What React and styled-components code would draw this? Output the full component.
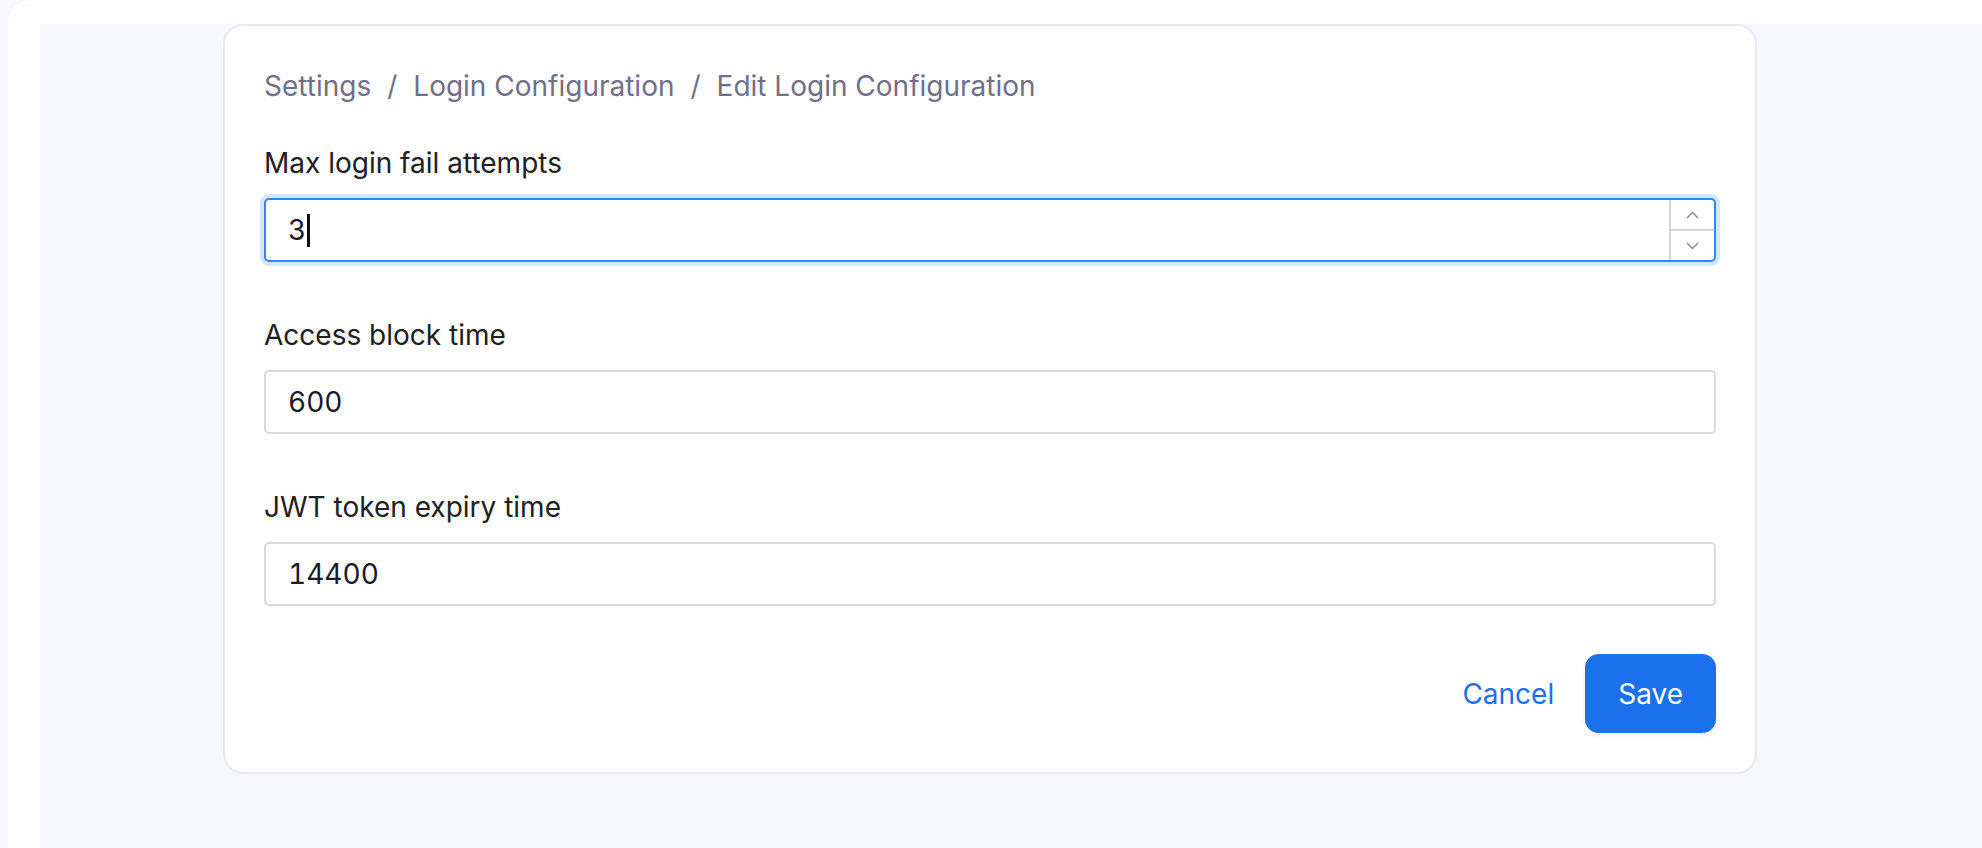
import React from 'react';
import styled, { createGlobalStyle } from 'styled-components';

const GlobalStyle = createGlobalStyle`
    html, body {
        margin: 0;
        padding: 0;
        background: #f7f8fc;
        font-family: Inter, "Noto Sans", sans-serif;
    }
    #root {
        min-height: 100vh;
        display: flex;
    }
`;

const fields = [
    { label: 'Max login fail attempts', value: '3', focused: true },
    { label: 'Access block time', value: '600' },
    { label: 'JWT token expiry time', value: '14400' },
];

const crumbs = ['Settings', 'Login Configuration', 'Edit Login Configuration'];

const Chevron = ({ up }) => (
    <svg width="13" height="8" viewBox="0 0 13 8" fill="none">
        <path
            d={up ? 'M1 7 L6.5 1.5 L12 7' : 'M1 1 L6.5 6.5 L12 1'}
            stroke="#888888"
            strokeWidth="1.4"
        />
    </svg>
);

const App = () => {
    return (
        <Page>
            <GlobalStyle />
            <Shell>
                <Content>
                    <Card>
                        <Breadcrumb>
                            {crumbs.map((c, i) => (
                                <React.Fragment key={c}>
                                    {i > 0 && <Separator>/</Separator>}
                                    <Crumb>{c}</Crumb>
                                </React.Fragment>
                            ))}
                        </Breadcrumb>
                        <FieldList>
                            {fields.map(({ label, value, focused }) => (
                                <Field key={label}>
                                    <Label>{label}</Label>
                                    <InputBox focused={focused}>
                                        <Value>{value}</Value>
                                        {focused && <Caret />}
                                        {focused && (
                                            <Spinner>
                                                <SpinButton><Chevron up /></SpinButton>
                                                <SpinButton bottom><Chevron /></SpinButton>
                                            </Spinner>
                                        )}
                                    </InputBox>
                                </Field>
                            ))}
                        </FieldList>
                        <Actions>
                            <CancelButton>Cancel</CancelButton>
                            <SaveButton>Save</SaveButton>
                        </Actions>
                    </Card>
                </Content>
            </Shell>
        </Page>
    );
};

export default App;

// Styled Components
const Page = styled.div`
    flex: 1;
    display: flex;
    min-height: 848px;
    padding-left: 8px;
    background: #f7f8fc;
`;

const Shell = styled.div`
    flex: 1;
    display: flex;
    background: #ffffff;
    border-top-left-radius: 24px;
    padding: 24px 0 0 32px;
`;

const Content = styled.main`
    flex: 1;
    display: flex;
    align-items: flex-start;
    background: #f7f8fc;
    padding-left: 183px;
`;

const Card = styled.section`
    box-sizing: border-box;
    width: 1534px;
    background: #ffffff;
    border: 2px solid #e8eaf3;
    border-radius: 20px;
    padding: 39px;
    display: flex;
    flex-direction: column;
`;

const Breadcrumb = styled.nav`
    display: flex;
    align-items: center;
    font-size: 28px;
    line-height: 42px;
    color: #706f88;
    margin-bottom: 35px;
`;

const Crumb = styled.span``;

const Separator = styled.span`
    margin: 0 16px;
`;

const FieldList = styled.div`
    display: flex;
    flex-direction: column;
    gap: 52px;
    margin-bottom: 48px;
`;

const Field = styled.div`
    display: flex;
    flex-direction: column;
`;

const Label = styled.label`
    font-size: 28px;
    line-height: 42px;
    color: #202020;
    margin-bottom: 14px;
`;

const InputBox = styled.div`
    box-sizing: border-box;
    position: relative;
    display: flex;
    align-items: center;
    height: 64px;
    padding-left: 22px;
    border: 2px solid ${({ focused }) => (focused ? '#2f87f8' : '#dadada')};
    border-radius: 5px;
    background: #ffffff;
    box-shadow: ${({ focused }) => (focused ? '0 0 0 4px #d6e5fc' : 'none')};
    font-size: 28px;
    font-variant-numeric: tabular-nums;
    color: #171a2c;
`;

const Value = styled.span``;

const Caret = styled.span`
    width: 3px;
    height: 33px;
    margin-left: 1px;
    background: #111111;
`;

const Spinner = styled.div`
    margin-left: auto;
    align-self: stretch;
    width: 43px;
    display: flex;
    flex-direction: column;
    border-left: 2px solid #d6d6d6;
`;

const SpinButton = styled.div`
    flex: 1;
    display: flex;
    align-items: center;
    justify-content: center;
    border-top: ${({ bottom }) => (bottom ? '2px solid #d6d6d6' : 'none')};
`;

const Actions = styled.div`
    display: flex;
    justify-content: flex-end;
    align-items: center;
`;

const CancelButton = styled.button`
    height: 79px;
    padding: 0 31px 0 33px;
    border: none;
    background: transparent;
    color: #1a71eb;
    font-family: Inter, sans-serif;
    font-size: 28px;
    cursor: pointer;
`;

const SaveButton = styled.button`
    height: 79px;
    padding: 0 33px;
    border: none;
    border-radius: 14px;
    background: #1a71eb;
    color: #ffffff;
    font-family: Inter, sans-serif;
    font-size: 28px;
    box-shadow: 0 2px 5px rgba(20, 40, 80, 0.08);
    cursor: pointer;
`;
